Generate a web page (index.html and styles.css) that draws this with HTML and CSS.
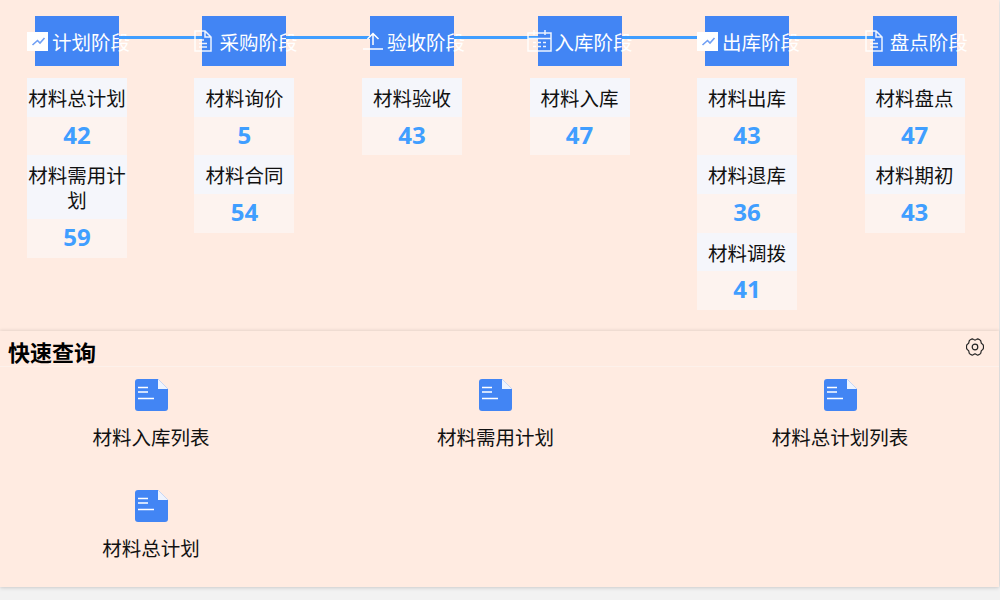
FILE: index.html
```html
<!DOCTYPE html>
<html lang="zh-CN">
<head>
    <meta charset="UTF-8">
    <title>材料管理</title>
    <link rel="stylesheet" href="styles.css">
</head>
<body>
    <div class="page">
        <div class="stages">
            <div class="stage">
                <div class="stage-head">
                    <svg class="stage-icon icon-chart" viewBox="0 0 21 19"><rect width="21" height="19" fill="#fff"/><path d="M5.500 13l5-4.500 2.500 2.500 4.500-5" fill="none" stroke="#6f9ff5" stroke-width="1.600"/></svg>
                    <span>计划阶段</span>
                </div>
                <div class="card-label">材料总计划</div>
                <div class="card-num">42</div>
                <div class="card-label">材料需用计划</div>
                <div class="card-num">59</div>
            </div>
            <div class="stage">
                <div class="stage-head">
                    <svg class="stage-icon icon-doc" viewBox="0 0 18 22"><path d="M1 1h10l6 6v14H1z M11 1v6h6 M5 10h5 M5 13.500h8 M5 17h8" fill="none" stroke="#fff" stroke-width="1.500" opacity="0.9"/></svg>
                    <span>采购阶段</span>
                </div>
                <div class="card-label">材料询价</div>
                <div class="card-num">5</div>
                <div class="card-label">材料合同</div>
                <div class="card-num">54</div>
            </div>
            <div class="stage">
                <div class="stage-head">
                    <svg class="stage-icon icon-up" viewBox="0 0 20 18"><path d="M0 17h20 M10 13V1.500 M4.500 7L10 1.500 15.500 7" fill="none" stroke="#fff" stroke-width="1.500"/></svg>
                    <span>验收阶段</span>
                </div>
                <div class="card-label">材料验收</div>
                <div class="card-num">43</div>
            </div>
            <div class="stage">
                <div class="stage-head">
                    <svg class="stage-icon icon-cal" viewBox="0 0 25 22"><path d="M1 3h23v18H1z M1 8.500h23 M7 0v5 M18 0v5 M6 12.500h3 M11 12.500h3 M16 12.500h3 M6 16.500h3 M11 16.500h3 M16 16.500h3" fill="none" stroke="#fff" stroke-width="1.500" opacity="0.9"/></svg>
                    <span>入库阶段</span>
                </div>
                <div class="card-label">材料入库</div>
                <div class="card-num">47</div>
            </div>
            <div class="stage">
                <div class="stage-head">
                    <svg class="stage-icon icon-chart" viewBox="0 0 21 19"><rect width="21" height="19" fill="#fff"/><path d="M5.500 13l5-4.500 2.500 2.500 4.500-5" fill="none" stroke="#6f9ff5" stroke-width="1.600"/></svg>
                    <span>出库阶段</span>
                </div>
                <div class="card-label">材料出库</div>
                <div class="card-num">43</div>
                <div class="card-label">材料退库</div>
                <div class="card-num">36</div>
                <div class="card-label">材料调拨</div>
                <div class="card-num">41</div>
            </div>
            <div class="stage">
                <div class="stage-head">
                    <svg class="stage-icon icon-doc" viewBox="0 0 18 22"><path d="M1 1h10l6 6v14H1z M11 1v6h6 M5 10h5 M5 13.500h8 M5 17h8" fill="none" stroke="#fff" stroke-width="1.500" opacity="0.9"/></svg>
                    <span>盘点阶段</span>
                </div>
                <div class="card-label">材料盘点</div>
                <div class="card-num">47</div>
                <div class="card-label">材料期初</div>
                <div class="card-num">43</div>
            </div>
        </div>

        <div class="quick">
            <div class="quick-head">
                <h3>快速查询</h3>
                <svg class="gear" viewBox="0 0 18 18"><path d="M6.200.900c.5 0 .9.200 1.200.5.900.7 2.300.7 3.200 0 .3-.3.700-.5 1.200-.5 1 .3 1.900.8 2.700 1.500.3.400.4.800.4 1.200 0 1.200.6 2.200 1.600 2.700.4.200.7.500.8 1 .3 1.100.3 2.300 0 3.400-.1.500-.4.800-.8 1-1 .5-1.600 1.500-1.600 2.700 0 .4-.1.800-.4 1.200-.8.700-1.700 1.200-2.700 1.500-.5 0-.9-.2-1.200-.5-.9-.7-2.300-.7-3.200 0-.3.300-.7.500-1.200.5-1-.3-1.900-.8-2.700-1.500-.3-.4-.4-.8-.4-1.200 0-1.200-.6-2.200-1.600-2.700-.4-.2-.7-.5-.8-1-.3-1.100-.3-2.300 0-3.400.1-.5.400-.8.800-1 1-.5 1.600-1.500 1.600-2.700 0-.4.100-.8.400-1.200.8-.7 1.700-1.200 2.700-1.500z" fill="none" stroke="#222" stroke-width="1.200"/><circle cx="9" cy="9" r="2.800" fill="none" stroke="#222" stroke-width="1.200"/></svg>
            </div>
            <div class="quick-grid">
                <div class="quick-item">
                    <svg class="doc" viewBox="0 0 33 32"><path d="M3 0h20l10 10v19a3 3 0 0 1-3 3H3a3 3 0 0 1-3-3V3a3 3 0 0 1 3-3z" fill="#4285f4"/><path d="M23 0l10 10H23z" fill="#eef3fe"/><path d="M3 8.500h10 M3 13h10 M3 19.500h16" stroke="#fff" stroke-width="1.500"/></svg>
                    <span>材料入库列表</span>
                </div>
                <div class="quick-item">
                    <svg class="doc" viewBox="0 0 33 32"><path d="M3 0h20l10 10v19a3 3 0 0 1-3 3H3a3 3 0 0 1-3-3V3a3 3 0 0 1 3-3z" fill="#4285f4"/><path d="M23 0l10 10H23z" fill="#eef3fe"/><path d="M3 8.500h10 M3 13h10 M3 19.500h16" stroke="#fff" stroke-width="1.500"/></svg>
                    <span>材料需用计划</span>
                </div>
                <div class="quick-item">
                    <svg class="doc" viewBox="0 0 33 32"><path d="M3 0h20l10 10v19a3 3 0 0 1-3 3H3a3 3 0 0 1-3-3V3a3 3 0 0 1 3-3z" fill="#4285f4"/><path d="M23 0l10 10H23z" fill="#eef3fe"/><path d="M3 8.500h10 M3 13h10 M3 19.500h16" stroke="#fff" stroke-width="1.500"/></svg>
                    <span>材料总计划列表</span>
                </div>
                <div class="quick-item">
                    <svg class="doc" viewBox="0 0 33 32"><path d="M3 0h20l10 10v19a3 3 0 0 1-3 3H3a3 3 0 0 1-3-3V3a3 3 0 0 1 3-3z" fill="#4285f4"/><path d="M23 0l10 10H23z" fill="#eef3fe"/><path d="M3 8.500h10 M3 13h10 M3 19.500h16" stroke="#fff" stroke-width="1.500"/></svg>
                    <span>材料总计划</span>
                </div>
            </div>
        </div>
    </div>
</body>
</html>
```

FILE: styles.css
```css
html, body {
    height: 100%;
    overflow: hidden;
}

body {
    font-family: "Noto Sans CJK SC", "Noto Sans", sans-serif;
    background-color: #f2f2f2;
    margin: 0;
    color: #111;
}

.page {
    width: 999px;
    height: 587px;
    background: #ffebe1;
    box-shadow: 0 1px 4px rgba(0,0,0,0.15);
}

.stages {
    display: flex;
    gap: 67.55px;
    height: 331px;
    box-sizing: border-box;
    padding: 16px 0 0 26.9px;
}

.stage {
    flex: none;
    width: 100px;
}

.stage-head {
    position: relative;
    display: flex;
    justify-content: flex-end;
    align-items: center;
    width: 84px;
    height: 50px;
    margin: 0 8px 12px;
    background: #4285f4;
    color: #fff;
    font-size: 19.5px;
    white-space: nowrap;
}

.stage-head span {
    flex: none;
    width: 78px;
    margin-right: -11px;
}

/* line to the next stage */
.stage:not(:last-child) .stage-head::after {
    content: "";
    position: absolute;
    left: 100%;
    top: 20px;
    width: 84px;
    height: 2.5px;
    background: #409eff;
}

.stage-icon {
    flex: none;
}

.icon-chart {
    width: 21px;
    height: 19px;
    margin-right: 4px;
}

.icon-doc {
    width: 18px;
    height: 22px;
    margin-right: 7px;
}

.icon-up {
    width: 20px;
    height: 18px;
    margin-right: 4px;
}

.icon-cal {
    width: 25px;
    height: 22px;
    margin-right: 3px;
}

.card-label {
    padding: 7px 0 6.67px;
    background: #f5f6fb;
    font-size: 19.5px;
    line-height: 25px;
    text-align: center;
}

.card-num {
    height: 38.67px;
    background: #fdf3ef;
    color: #409eff;
    font-family: "Open Sans", sans-serif;
    font-size: 24px;
    font-weight: bold;
    line-height: 36px;
    text-align: center;
}

.quick {
    height: 256px;
    box-shadow: 0 -1px 3px rgba(0,0,0,0.1);
}

.quick-head {
    display: flex;
    justify-content: space-between;
    height: 35px;
    padding: 0 15px 0 8px;
    border-bottom: 1px solid #fdf1eb;
}

.quick-head h3 {
    margin: 7px 0 0;
    font-size: 22px;
    line-height: 26px;
    color: #000;
}

.gear {
    width: 18px;
    height: 18px;
    margin-top: 7px;
}

.quick-grid {
    display: grid;
    grid-template-columns: repeat(3, 302px);
    column-gap: 42.5px;
    padding-top: 12px;
}

.quick-item {
    display: flex;
    flex-direction: column;
    align-items: center;
    height: 111px;
    font-size: 19.5px;
}

.doc {
    width: 33px;
    height: 32px;
    margin-bottom: 11px;
}
```
